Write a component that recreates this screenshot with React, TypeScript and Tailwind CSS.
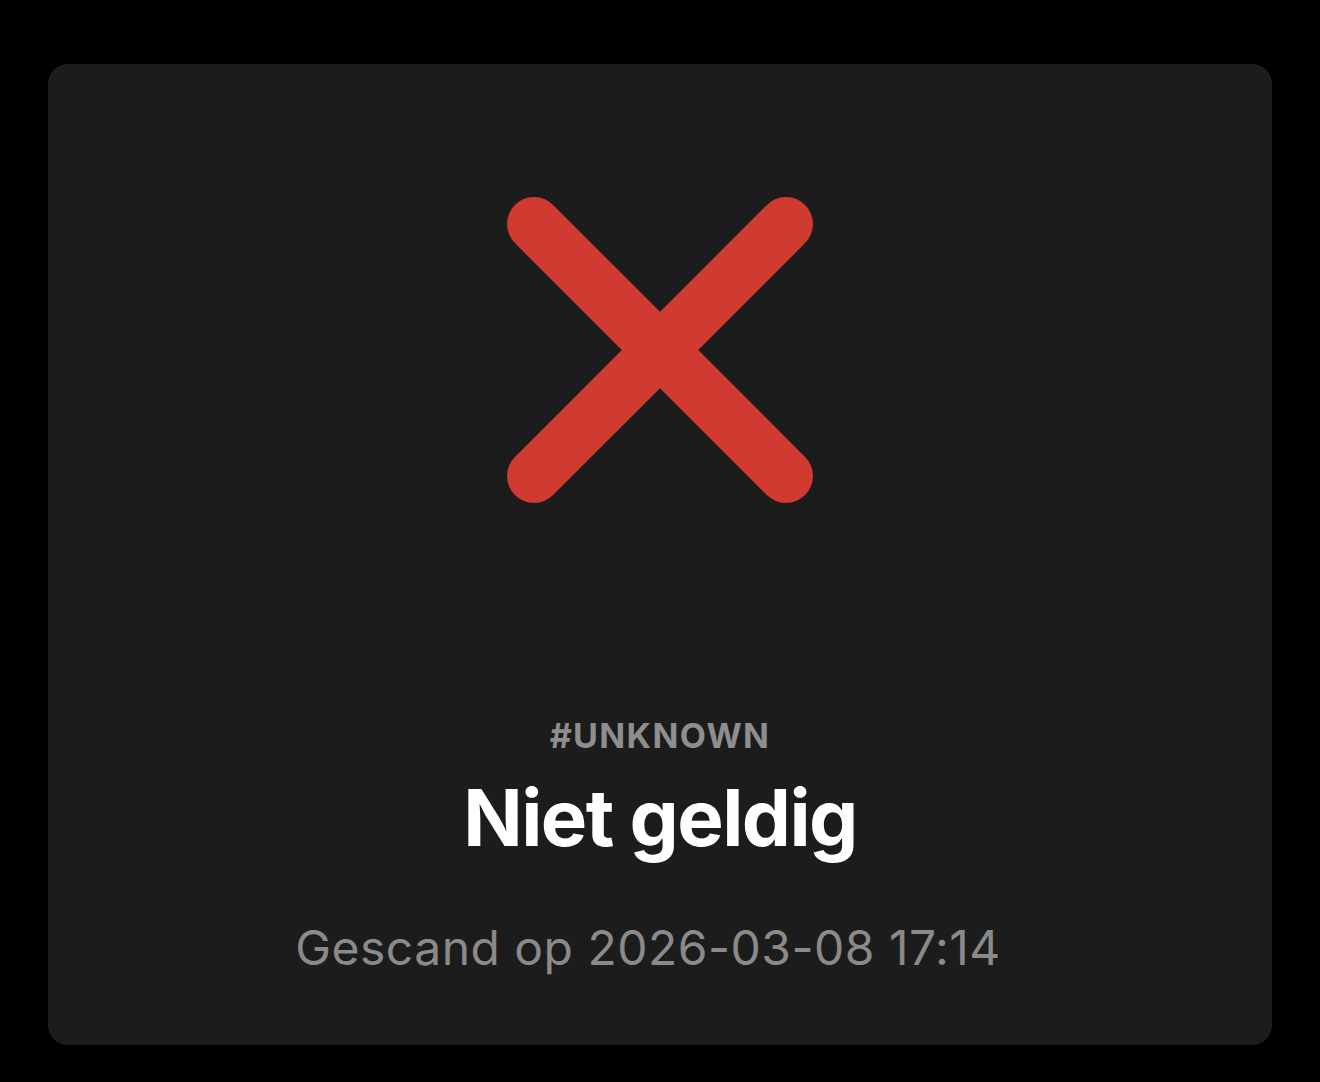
import React from 'react';

const XMark: React.FC = () => (
  <svg width="306" height="306" viewBox="0 0 306 306" fill="none">
    <path
      d="M27 27L279 279M279 27L27 279"
      stroke="#d13a30"
      strokeWidth="54"
      strokeLinecap="round"
    />
  </svg>
);

export default function App() {
  return (
    <div className="min-h-[1082px] w-full bg-black pt-16 px-12" style={{ fontFamily: 'Inter, "Noto Sans", sans-serif' }}>
      <div className="h-[981px] rounded-[20px] bg-[#1c1c1c] flex flex-col items-center pt-[133px]">
        <XMark />
        <div className="mt-[215px] text-[34px] leading-[36px] font-bold tracking-[0.04em] text-[#8e8e8e]">
          #UNKNOWN
        </div>
        <h1 className="mt-[24px] text-[78px] leading-[80px] font-bold tracking-[-0.02em] text-white">
          Niet geldig
        </h1>
        <p className="mt-[64px] pr-[24px] text-[48px] leading-[52px] tracking-[0.01em] text-[#8a8a8a]">
          Gescand op 2026-03-08 17:14
        </p>
      </div>
    </div>
  );
}
